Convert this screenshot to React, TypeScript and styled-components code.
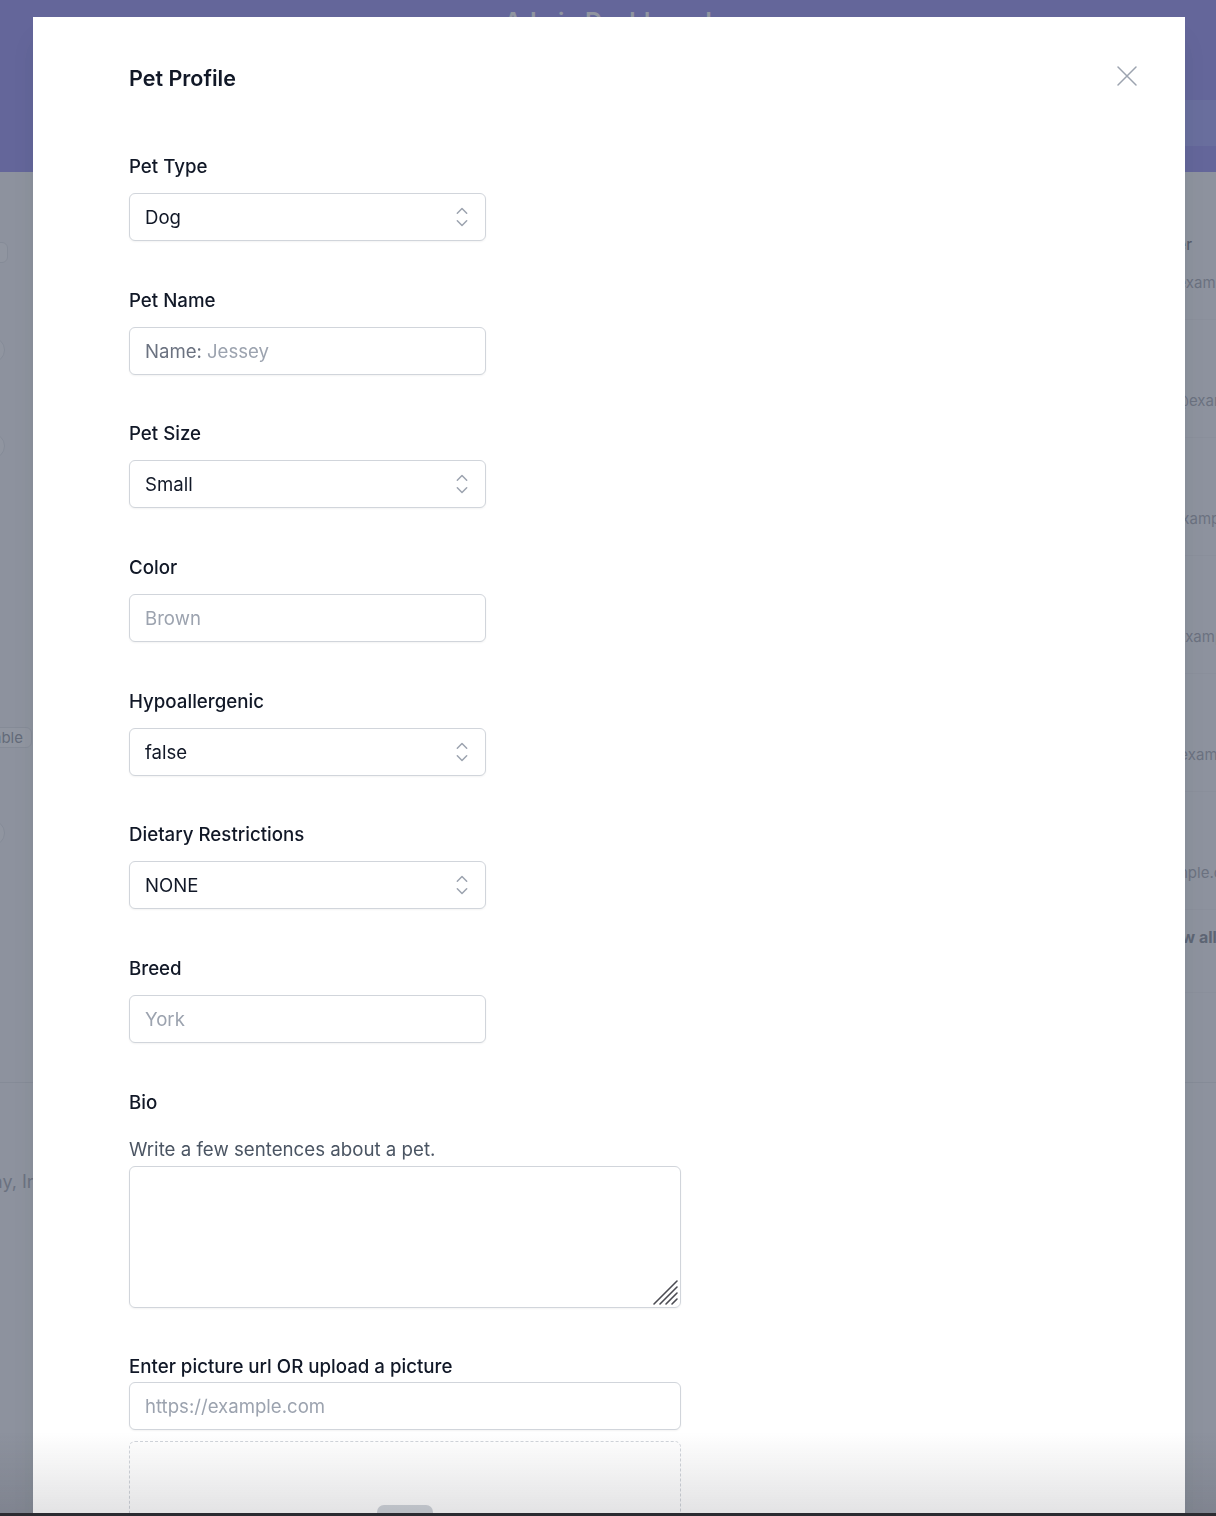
import React from 'react';
import styled, { createGlobalStyle } from 'styled-components';

const GlobalStyle = createGlobalStyle`
  html, body {
    margin: 0;
    padding: 0;
    height: 100%;
    overflow: hidden;
  }
  body {
    font-family: Inter, "Noto Sans", "Liberation Sans", sans-serif;
    color: #111827;
    -webkit-font-smoothing: antialiased;
  }
  * {
    box-sizing: border-box;
  }
`;

/* ---------- dashboard behind the dialog ---------- */

const Page = styled.div`
  min-height: 100vh;
  background: #f3f4f6;
  display: flex;
  flex-direction: column;
`;

const Header = styled.header`
  height: 172px;
  background: #4f46e5;
  display: flex;
  flex-direction: column;
`;

const HeaderTitle = styled.h1`
  margin: 0;
  padding-top: 6px;
  text-align: center;
  font-size: 24px;
  line-height: 32px;
  font-weight: 600;
  color: #ffffff;
`;

const HeaderBar = styled.div`
  margin-top: 62px;
  display: flex;
  justify-content: flex-end;
`;

const HeaderTab = styled.div`
  width: 180px;
  height: 46px;
  background: #6366f1;
`;

const Main = styled.main`
  flex: 1;
  display: grid;
  grid-template-columns: 60px 1fr 200px;
`;

const LeftStrip = styled.div`
  display: flex;
  flex-direction: column;
  overflow: hidden;
  padding-top: 70px;
`;

const StripRow = styled.div<{ $top: number; $inset: number }>`
  display: flex;
  justify-content: flex-end;
  margin-top: ${({ $top }) => $top}px;
  padding-right: ${({ $inset }) => $inset}px;
`;

const Chip = styled.span`
  flex-shrink: 0;
  padding: 0 8px;
  height: 21px;
  line-height: 19px;
  border: 1px solid #d1d5db;
  border-radius: 6px;
  background: #ffffff;
  font-size: 15px;
  color: #4b5563;
`;

const GhostInput = styled.span`
  flex-shrink: 0;
  width: 120px;
  height: 26px;
  border: 1px solid #d1d5db;
  border-radius: 13px;
  background: #ffffff;
`;

const Center = styled.div``;

const RightList = styled.div`
  display: flex;
  flex-direction: column;
  padding-top: 30px;
  overflow: hidden;
`;

const ListRow = styled.div`
  height: 118px;
  padding: 32px 0 0 84px;
  border-bottom: 1px solid #e5e7eb;
  white-space: nowrap;
`;

const ListName = styled.div`
  font-size: 15px;
  line-height: 22px;
  font-weight: 500;
  color: #111827;
`;

const ListEmail = styled.div`
  margin-top: 16px;
  font-size: 15px;
  line-height: 22px;
  color: #6b7280;
`;

const ViewAll = styled.div`
  height: 83px;
  padding: 16px 0 0 140px;
  font-size: 16px;
  line-height: 22px;
  font-weight: 700;
  color: #374151;
  border-bottom: 1px solid #e5e7eb;
  white-space: nowrap;
`;

const Footer = styled.footer`
  height: 434px;
  border-top: 1px solid #d1d5db;
  margin-top: -10px;
  padding-top: 88px;
  background: #f3f4f6;
  white-space: nowrap;
  overflow: hidden;
`;

const FooterText = styled.p`
  margin: 0 0 0 -140px;
  font-size: 18px;
  color: #6b7280;
`;

const Overlay = styled.div`
  position: fixed;
  inset: 0;
  background: rgba(107, 114, 128, 0.75);
`;

/* ---------- the dialog ---------- */

const Dialog = styled.div`
  position: fixed;
  top: 17px;
  left: 33px;
  width: 1152px;
  height: 1640px;
  background: #ffffff;
  padding: 47px 96px 0;
  box-shadow: 0 20px 25px -5px rgba(0, 0, 0, 0.1);
`;

const TitleRow = styled.div`
  display: flex;
  justify-content: space-between;
  align-items: center;
`;

const Title = styled.h2`
  margin: 0;
  font-size: 21.5px;
  line-height: 28px;
  font-weight: 600;
  color: #111827;
`;

const CloseButton = styled.button`
  margin: -4px -50px 0 0;
  width: 24px;
  height: 24px;
  padding: 0;
  border: 0;
  background: none;
  color: #9ca3af;
  display: flex;
  align-items: center;
  justify-content: center;
`;

const Form = styled.form`
  margin-top: 63px;
  display: flex;
  flex-direction: column;
  gap: 47.67px;
`;

const Field = styled.div<{ $wide?: boolean }>`
  width: ${({ $wide }) => ($wide ? 552 : 357)}px;
  display: flex;
  flex-direction: column;
`;

const Label = styled.label<{ $gap: number }>`
  display: block;
  font-size: 18.7px;
  line-height: 24px;
  font-weight: 500;
  color: #111827;
  margin-bottom: ${({ $gap }) => $gap}px;
`;

const Help = styled.p`
  margin: 0 0 4px;
  font-size: 18.7px;
  line-height: 24px;
  color: #4b5563;
`;

const Box = styled.div`
  position: relative;
  height: 48px;
  display: flex;
  align-items: center;
  padding: 0 15px;
  border: 1px solid #d1d5db;
  border-radius: 6px;
  background: #ffffff;
  box-shadow: 0 1px 2px rgba(0, 0, 0, 0.05);
`;

const Prefix = styled.span`
  font-size: 18.6px;
  color: #6b7280;
  margin-right: 5px;
  white-space: nowrap;
`;

const TextInput = styled.input`
  flex: 1;
  min-width: 0;
  border: 0;
  outline: none;
  padding: 0;
  background: transparent;
  font: inherit;
  font-size: 18.6px;
  color: #111827;
  &::placeholder {
    color: #9ca3af;
  }
`;

const Select = styled.select`
  flex: 1;
  appearance: none;
  border: 0;
  outline: none;
  padding: 0;
  background: transparent;
  font: inherit;
  font-size: 18.6px;
  color: #111827;
`;

const SelectIcon = styled.svg`
  position: absolute;
  right: 8px;
  top: 50%;
  margin-top: -15px;
  width: 30px;
  height: 30px;
  color: #9ca3af;
  pointer-events: none;
`;

const AreaBox = styled.div`
  position: relative;
  height: 142px;
  border: 1px solid #d1d5db;
  border-radius: 6px;
  box-shadow: 0 1px 2px rgba(0, 0, 0, 0.05);
`;

const TextArea = styled.textarea`
  width: 100%;
  height: 100%;
  border: 0;
  outline: none;
  resize: none;
  padding: 12px 16px;
  background: transparent;
  font: inherit;
  font-size: 18.6px;
`;

const ResizeGrip = styled.svg`
  position: absolute;
  right: 1px;
  bottom: 1px;
  width: 27px;
  height: 27px;
  pointer-events: none;
`;

const Dropzone = styled.div`
  margin-top: 11px;
  height: 220px;
  border: 1px dashed #d1d5db;
  border-radius: 6px;
  display: flex;
  justify-content: center;
  padding-top: 63px;
`;

const UploadPill = styled.div`
  width: 56px;
  height: 26px;
  border-radius: 7px;
  background: #d1d5db;
`;

const BottomShade = styled.div`
  position: fixed;
  left: 0;
  right: 0;
  bottom: 0;
  height: 84px;
  background: linear-gradient(to bottom, rgba(40, 40, 50, 0), rgba(40, 40, 50, 0.13));
  border-bottom: 3px solid #2b2b31;
  pointer-events: none;
`;

function UpDown() {
  return (
    <SelectIcon viewBox="0 0 24 24" fill="none" stroke="currentColor" strokeWidth={1.2}>
      <path strokeLinecap="round" strokeLinejoin="round" d="M8.25 15 12 18.75 15.75 15m-7.5-6L12 5.25 15.75 9" />
    </SelectIcon>
  );
}

function SelectField({ label, value, options }: { label: string; value: string; options: string[] }) {
  return (
    <Field>
      <Label $gap={14}>{label}</Label>
      <Box>
        <Select defaultValue={value}>
          {options.map((o) => (
            <option key={o}>{o}</option>
          ))}
        </Select>
        <UpDown />
      </Box>
    </Field>
  );
}

function InputField({ label, placeholder, prefix }: { label: string; placeholder: string; prefix?: string }) {
  return (
    <Field>
      <Label $gap={14}>{label}</Label>
      <Box>
        {prefix && <Prefix>{prefix}</Prefix>}
        <TextInput placeholder={placeholder} />
      </Box>
    </Field>
  );
}

const people = [
  { name: 'Jane Cooper', email: 'courtney@example.com' },
  { name: 'Tom Cook', email: 'tom.cooke@example.com' },
  { name: 'Whitney', email: 'whitney.@example.com' },
  { name: 'Leonard', email: 'leonardo@example.com' },
  { name: 'Michael', email: 'michael.f@example.com' },
  { name: 'Floyd Miles', email: 'floyd@example.com' },
];

export default function App() {
  return (
    <>
      <GlobalStyle />
      <Page>
        <Header>
          <HeaderTitle>Admin Dashboard</HeaderTitle>
          <HeaderBar>
            <HeaderTab />
          </HeaderBar>
        </Header>
        <Main>
          <LeftStrip>
            <StripRow $top={0} $inset={52}>
              <Chip>Large</Chip>
            </StripRow>
            <StripRow $top={74} $inset={55}>
              <GhostInput />
            </StripRow>
            <StripRow $top={70} $inset={55}>
              <GhostInput />
            </StripRow>
            <StripRow $top={268} $inset={28}>
              <Chip>Available</Chip>
            </StripRow>
            <StripRow $top={72} $inset={55}>
              <GhostInput />
            </StripRow>
          </LeftStrip>
          <Center />
          <RightList>
            {people.map((p) => (
              <ListRow key={p.email}>
                <ListName>{p.name}</ListName>
                <ListEmail>{p.email}</ListEmail>
              </ListRow>
            ))}
            <ViewAll>View all</ViewAll>
          </RightList>
        </Main>
        <Footer>
          <FooterText>© 2023 Company, Inc. All rights reserved.</FooterText>
        </Footer>
      </Page>
      <Overlay />

      <Dialog>
        <TitleRow>
          <Title>Pet Profile</Title>
          <CloseButton type="button" aria-label="Close">
            <svg width="24" height="24" viewBox="0 0 24 24" fill="none" stroke="currentColor" strokeWidth={1.5}>
              <path strokeLinecap="round" d="M3 3l18 18M21 3 3 21" />
            </svg>
          </CloseButton>
        </TitleRow>

        <Form>
          <SelectField label="Pet Type" value="Dog" options={['Dog', 'Cat', 'Bird']} />
          <InputField label="Pet Name" prefix="Name:" placeholder="Jessey" />
          <SelectField label="Pet Size" value="Small" options={['Small', 'Medium', 'Large']} />
          <InputField label="Color" placeholder="Brown" />
          <SelectField label="Hypoallergenic" value="false" options={['false', 'true']} />
          <SelectField label="Dietary Restrictions" value="NONE" options={['NONE', 'GRAIN FREE', 'RAW']} />
          <InputField label="Breed" placeholder="York" />

          <Field $wide>
            <Label $gap={23}>Bio</Label>
            <Help>Write a few sentences about a pet.</Help>
            <AreaBox>
              <TextArea />
              <ResizeGrip viewBox="0 0 27 27" stroke="#4b4b52" strokeWidth={1.6} strokeLinecap="round">
                <path d="M2 25 25 2M8 25 25 8M14 25 25 14M20 25 25 20" />
              </ResizeGrip>
            </AreaBox>
          </Field>

          <Field $wide>
            <Label $gap={3}>Enter picture url OR upload a picture</Label>
            <Box>
              <TextInput placeholder="https://example.com" />
            </Box>
            <Dropzone>
              <UploadPill />
            </Dropzone>
          </Field>
        </Form>
      </Dialog>
      <BottomShade />
    </>
  );
}
